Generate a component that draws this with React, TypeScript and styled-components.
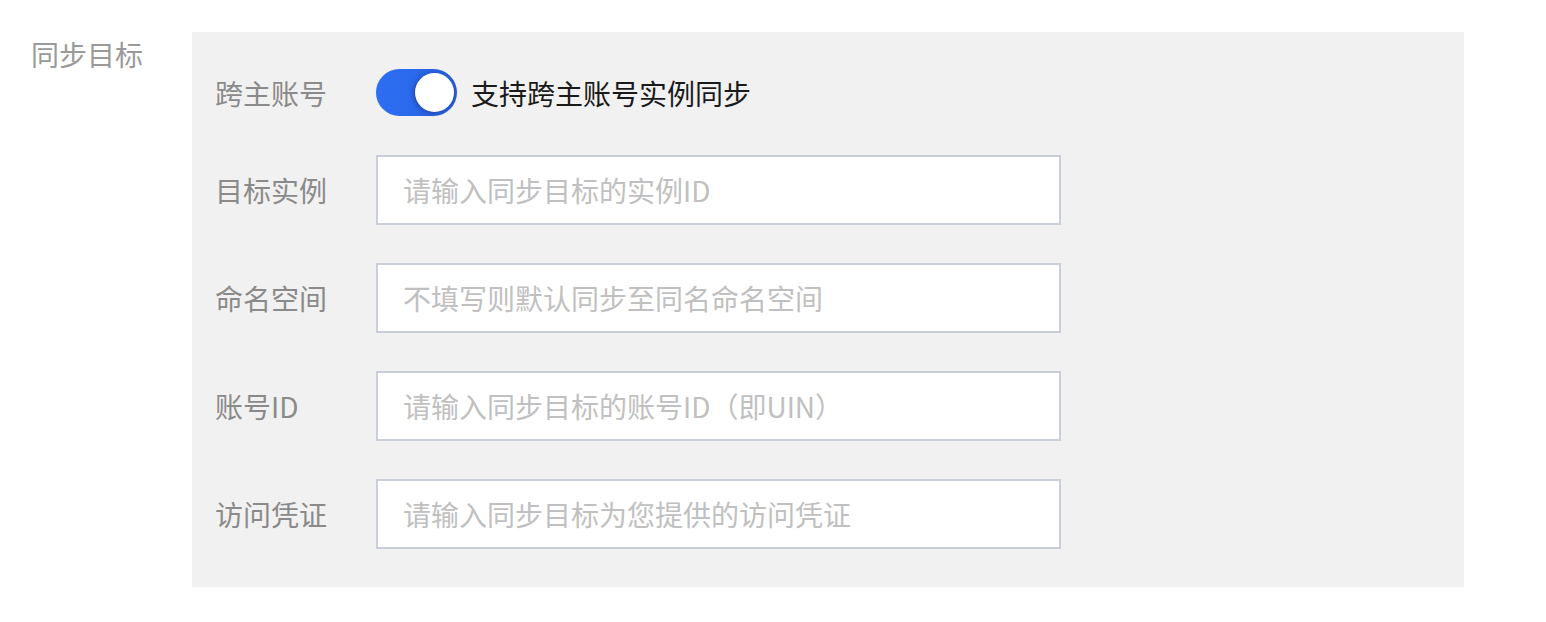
import React from 'react';
import styled, { createGlobalStyle } from 'styled-components';

const GlobalStyle = createGlobalStyle`
  html, body {
    margin: 0;
    padding: 0;
    background: #ffffff;
    font-family: "Noto Sans CJK SC", "Noto Sans", sans-serif;
  }
`;

const Page = styled.div`
  display: flex;
  align-items: flex-start;
  padding: 32px 0 0 31px;
`;

const SectionLabel = styled.div`
  width: 161px;
  flex-shrink: 0;
  font-size: 28px;
  line-height: 1;
  color: #9a9a9a;
  padding-top: 8px;
`;

const Panel = styled.div`
  width: 1272px;
  box-sizing: border-box;
  background: #f1f1f1;
  padding: 36px 23px 38px;
  display: flex;
  flex-direction: column;
  gap: 38px;
`;

const Row = styled.div<{ $height: number }>`
  display: flex;
  align-items: center;
  height: ${({ $height }) => $height}px;
`;

const RowLabel = styled.label`
  width: 161px;
  flex-shrink: 0;
  font-size: 28px;
  line-height: 1;
  color: #8a8a8a;
`;

const Track = styled.div`
  width: 81px;
  height: 47px;
  border-radius: 24px;
  background: linear-gradient(90deg, #2d6ef2 0%, #2b69ec 45%, #2559d4 100%);
  display: flex;
  align-items: center;
  justify-content: flex-end;
  padding-right: 3px;
  box-sizing: border-box;
`;

const Knob = styled.div`
  width: 39px;
  height: 39px;
  border-radius: 50%;
  background: #ffffff;
  box-shadow: -2px 1px 4px rgba(20, 40, 110, 0.45);
`;

const ToggleText = styled.span`
  margin-left: 14px;
  font-size: 28px;
  line-height: 1;
  color: #1a1a1a;
`;

const TextInput = styled.input`
  width: 685px;
  height: 70px;
  box-sizing: border-box;
  border: 2px solid #c9ced8;
  background: #ffffff;
  padding: 0 0 0 25px;
  font-family: inherit;
  font-size: 28px;
  color: #333;
  outline: none;

  &::placeholder {
    color: #c0c0c0;
  }
`;

const fields = [
  { label: '目标实例', placeholder: '请输入同步目标的实例ID' },
  { label: '命名空间', placeholder: '不填写则默认同步至同名命名空间' },
  { label: '账号ID', placeholder: '请输入同步目标的账号ID（即UIN）' },
  { label: '访问凭证', placeholder: '请输入同步目标为您提供的访问凭证' },
];

export default function App() {
  return (
    <>
      <GlobalStyle />
      <Page>
        <SectionLabel>同步目标</SectionLabel>
        <Panel>
          <Row $height={49}>
            <RowLabel>跨主账号</RowLabel>
            <Track>
              <Knob />
            </Track>
            <ToggleText>支持跨主账号实例同步</ToggleText>
          </Row>
          {fields.map((f) => (
            <Row key={f.label} $height={70}>
              <RowLabel>{f.label}</RowLabel>
              <TextInput placeholder={f.placeholder} />
            </Row>
          ))}
        </Panel>
      </Page>
    </>
  );
}
